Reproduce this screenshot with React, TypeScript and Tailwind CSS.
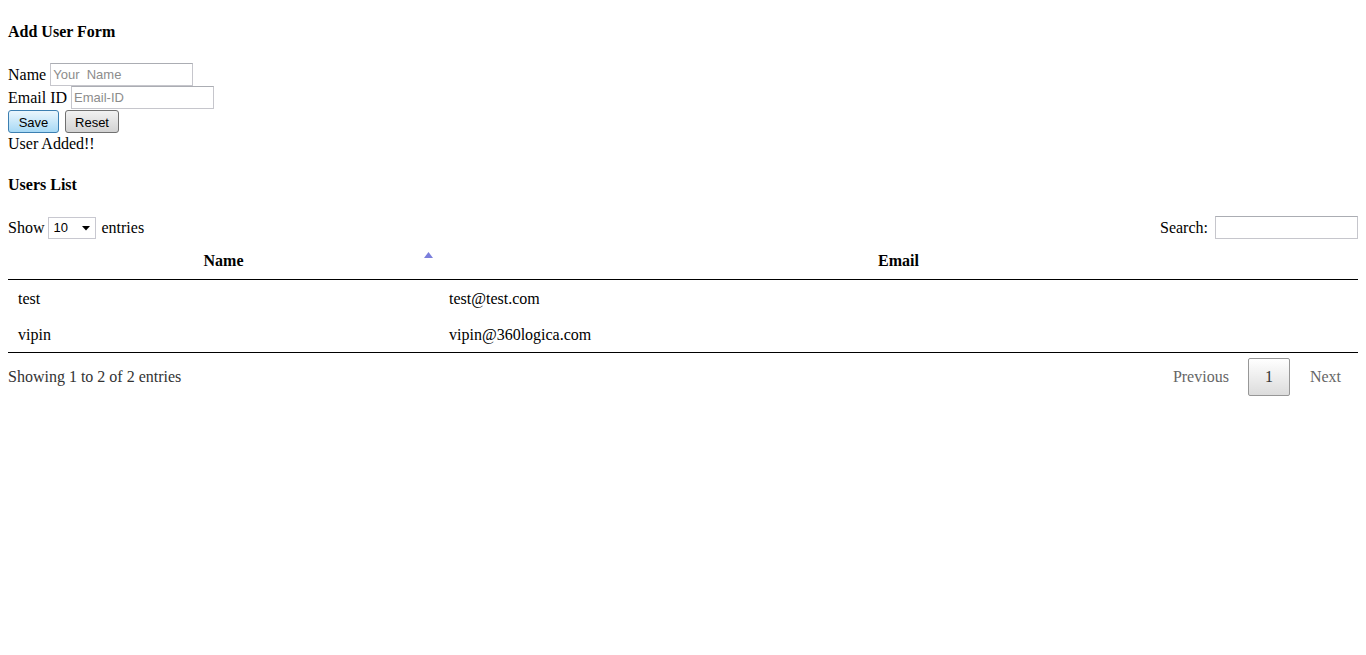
import React from "react";

export default function App() {
  const serif = "font-['Liberation_Serif','Times_New_Roman',serif]";
  const sans = "font-['Liberation_Sans',Arial,sans-serif]";
  return (
    <div className={`${serif} text-[16px] leading-[18px] text-black bg-white min-h-[655px] px-[8px] pt-[8px]`}>
      <h4 className="font-bold mt-[15px] leading-[18px]">Add User Form</h4>

      <div className="mt-[22px] flex items-center h-[23px] gap-[4px]">
        <span>Name</span>
        <input
          placeholder="Your  Name"
          className={`${sans} w-[143px] h-[23px] border border-[#c6c6cc] border-t-[#abadb3] px-[2px] text-[13px] outline-none placeholder:text-[#8c8c8c]`}
        />
      </div>
      <div className="flex items-center h-[23px] gap-[4px]">
        <span>Email ID</span>
        <input
          placeholder="Email-ID"
          className={`${sans} w-[143px] h-[23px] border border-[#c6c6cc] border-t-[#abadb3] px-[2px] text-[13px] outline-none placeholder:text-[#8c8c8c]`}
        />
      </div>
      <div className="mt-[1px] flex items-center h-[23px] gap-[6px]">
        <button
          className={`${sans} w-[51px] h-[23px] pt-[2px] text-[13px] leading-[13px] border border-[#3c7fb1] rounded-[3px] bg-gradient-to-b from-[#eaf6fd] to-[#a7d9f5]`}
        >
          Save
        </button>
        <button
          className={`${sans} w-[54px] h-[23px] pt-[2px] text-[13px] leading-[13px] border border-[#707070] rounded-[3px] bg-gradient-to-b from-[#f2f2f2] to-[#d2d2d2]`}
        >
          Reset
        </button>
      </div>
      <div className="mt-[2px]">User Added!!</div>

      <h4 className="font-bold mt-[23px] leading-[18px]">Users List</h4>

      <div className="mt-[22px] flex justify-between items-center h-[23px]">
        <div className="flex items-center gap-[4px]">
          <span>Show</span>
          <div className={`${sans} relative w-[48px] h-[22px] border border-[#c8c8d0] flex items-center pl-[4px] text-[13px]`}>
            10
            <svg className="absolute right-[5px] top-[8px]" width="8" height="5" viewBox="0 0 8 5">
              <path d="M0 0 H8 L4 4.5 Z" fill="#000" />
            </svg>
          </div>
          <span className="ml-[1px]">entries</span>
        </div>
        <div className="flex items-center">
          <span>Search:</span>
          <input className="ml-[7px] w-[143px] h-[23px] border border-[#c6c6cc] border-t-[#abadb3] outline-none" />
        </div>
      </div>

      <table className="w-full border-collapse mt-[1px]">
        <thead>
          <tr className="border-b border-black">
            <th className="relative w-[431px] h-[39px] px-[10px] pt-[12px] pb-[8px] font-bold text-center">
              Name
              <svg className="absolute right-[6px] top-[12px]" width="9" height="6" viewBox="0 0 9 6">
                <path d="M0 6 L4.5 0 L9 6 Z" fill="#7b7fdc" />
              </svg>
            </th>
            <th className="h-[39px] px-[10px] pt-[12px] pb-[8px] font-bold text-center">Email</th>
          </tr>
        </thead>
        <tbody>
          <tr>
            <td className="h-[36px] px-[10px] pt-[10px] pb-[8px]">test</td>
            <td className="h-[36px] px-[10px] pt-[10px] pb-[8px]">test@test.com</td>
          </tr>
          <tr className="border-b border-black">
            <td className="h-[36px] px-[10px] pt-[10px] pb-[8px]">vipin</td>
            <td className="h-[36px] px-[10px] pt-[10px] pb-[8px]">vipin@360logica.com</td>
          </tr>
        </tbody>
      </table>

      <div className="flex justify-between items-start">
        <div className="pt-[15px] text-[#333]">Showing 1 to 2 of 2 entries</div>
        <div className="pt-[5px] flex items-center gap-[3px]">
          <span className="h-[38px] flex items-center px-[16px] text-[#666]">Previous</span>
          <span className="h-[38px] flex items-center px-[16px] border border-[#979797] rounded-[2px] bg-gradient-to-b from-white to-[#dcdcdc] text-[#333]">
            1
          </span>
          <span className="h-[38px] flex items-center px-[17px] text-[#666]">Next</span>
        </div>
      </div>
    </div>
  );
}
